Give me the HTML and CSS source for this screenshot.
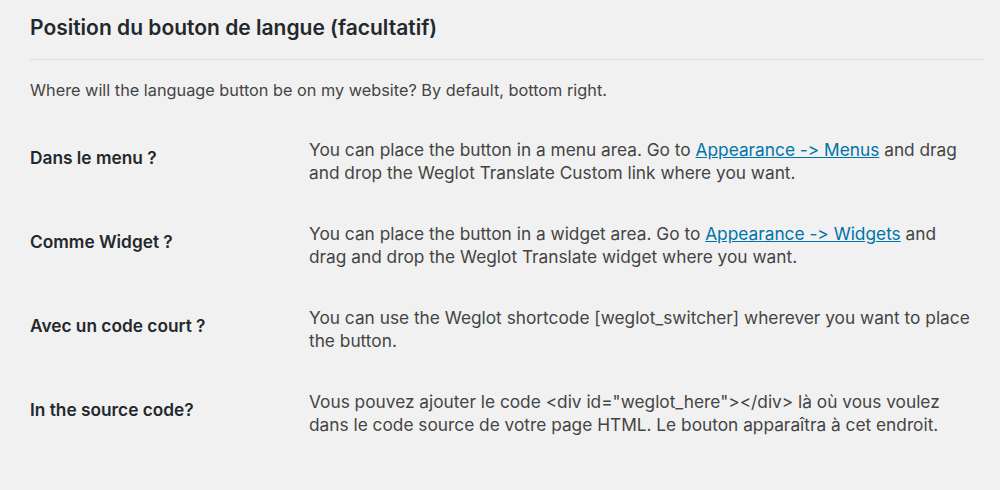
FILE: index.html
```html
<!DOCTYPE html>
<html lang="fr">
<head>
    <meta charset="UTF-8">
    <meta name="viewport" content="width=device-width, initial-scale=1.0">
    <title>Weglot - Position du bouton</title>
    <link rel="stylesheet" href="styles.css">
</head>
<body>
    <div class="wrap">
        <h2 class="section-title">Position du bouton de langue (facultatif)</h2>
        <hr class="divider">
        <p class="intro">Where will the language button be on my website? By default, bottom right.</p>
        <div class="form-table">
            <div class="row">
                <div class="label">Dans le menu ?</div>
                <div class="desc">You can place the button in a menu area. Go to <a href="#">Appearance -&gt; Menus</a> and drag and drop the Weglot Translate Custom link where you want.</div>
            </div>
            <div class="row">
                <div class="label">Comme Widget ?</div>
                <div class="desc">You can place the button in a widget area. Go to <a href="#">Appearance -&gt; Widgets</a> and drag and drop the Weglot Translate widget where you want.</div>
            </div>
            <div class="row">
                <div class="label">Avec un code court ?</div>
                <div class="desc">You can use the Weglot shortcode [weglot_switcher] wherever you want to place the button.</div>
            </div>
            <div class="row">
                <div class="label">In the source code?</div>
                <div class="desc">Vous pouvez ajouter le code &lt;div id="weglot_here"&gt;&lt;/div&gt; là où vous voulez dans le code source de votre page HTML. Le bouton apparaîtra à cet endroit.</div>
            </div>
        </div>
    </div>
</body>
</html>
```

FILE: styles.css
```css
body {
    background-color: #f1f1f1;
    margin: 0;
    font-family: Inter, "Noto Sans", sans-serif;
    font-feature-settings: "calt" 0, "liga" 0;
    color: #444;
}
.wrap {
    padding: 0 17px 0 30px;
}
.section-title {
    color: #23282d;
    font-size: 21px;
    font-weight: 600;
    line-height: 26px;
    margin: 0;
    padding-top: 15px;
}
.divider {
    border: none;
    border-top: 1px solid #dcdcdc;
    margin: 18px 0 0;
}
.intro {
    font-size: 16.3px;
    line-height: 22px;
    margin: 19px 0 19px;
}
.row {
    display: grid;
    grid-template-columns: 279px 1fr;
    padding: 19px 0 20px;
}
.label {
    color: #23282d;
    font-size: 17.3px;
    font-weight: 600;
    line-height: 22.5px;
    padding-top: 8px;
}
.desc {
    font-size: 17.3px;
    line-height: 22.5px;
    padding-right: 8px;
}
a {
    color: #0073aa;
    text-decoration: underline;
}
```
